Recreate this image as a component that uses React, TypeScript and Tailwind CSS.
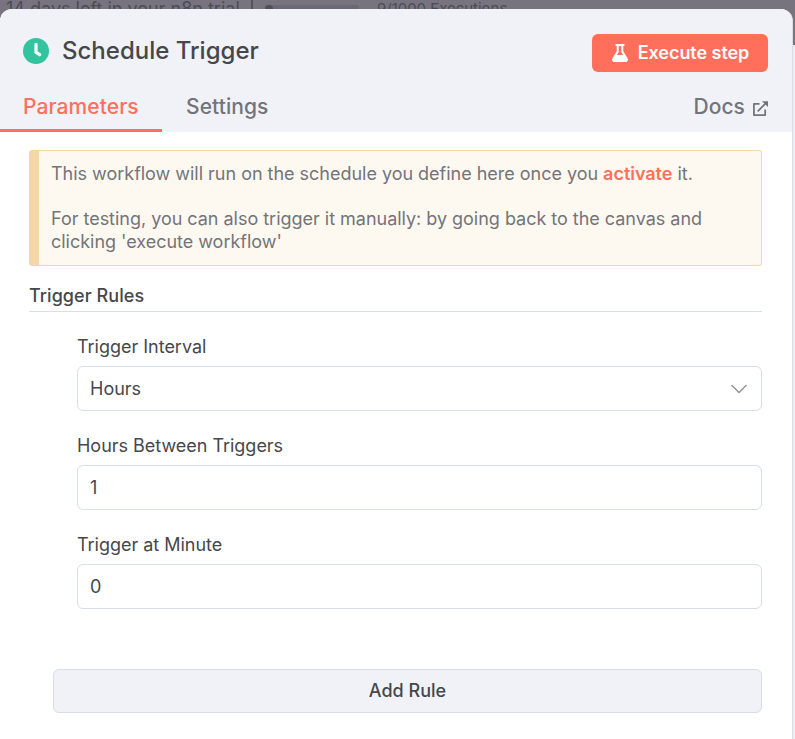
import type { ReactNode } from "react";

function ClockIcon() {
  return (
    <svg width="26" height="26" viewBox="0 0 26 26" className="shrink-0">
      <circle cx="13" cy="13" r="13" fill="#31c49f" />
      <path d="M13 6.300v8l3.700 2.400" fill="none" stroke="#fff" strokeWidth="3.200" strokeLinecap="round" strokeLinejoin="round" />
    </svg>
  );
}

function FlaskIcon() {
  return (
    <svg width="16" height="18" viewBox="0 0 16 18" className="shrink-0">
      <path
        fill="#fff"
        fillRule="evenodd"
        d="M3.6 0h8.8v2h-1.1v5.3l4.4 7.3c.8 1.5 0 3.4-1.8 3.4H2.1C.3 18-.5 16.100.3 14.600l4.400-7.300V2H3.600zM6.700 2v5.900L4.900 11h6.200L9.300 7.900V2z"
      />
    </svg>
  );
}

function ExternalIcon() {
  return (
    <svg width="15" height="15" viewBox="0 0 16 16" className="mt-[3px] shrink-0" fill="none" stroke="#73747a" strokeWidth="1.900">
      <path d="M7 3H1v12h12V9" strokeLinejoin="round" />
      <path d="M5 11 14 2" />
      <path d="M9.500.2H16v6.300z" fill="#73747a" stroke="none" />
    </svg>
  );
}

function Field({ label, value, children }: { label: string; value: string; children?: ReactNode }) {
  return (
    <div className="flex h-[99px] flex-col">
      <div className="flex h-[31px] items-start pt-px text-[18px] leading-[22px] tracking-[-0.02px]">{label}</div>
      <div className="flex h-[45px] items-center justify-between rounded-[6px] border border-[#d9dce9] bg-white pr-[13px] pl-3 text-[18px]">
        <span>{value}</span>
        {children}
      </div>
    </div>
  );
}

export default function App() {
  return (
    <div className="flex h-[739px] w-[795px] flex-col overflow-hidden bg-[#777480] font-['Inter',sans-serif] text-[#46474b]">
      <div className="flex h-[9px] shrink-0 items-start overflow-hidden whitespace-nowrap text-[#4c4b55]">
        <span className="w-[251px] shrink-0 pl-[6px] text-[18px] leading-[18px]">14 days left in your n8n trial</span>
        <span className="h-[9px] w-0.5 bg-[#55535e]" />
        <span className="mt-[5px] ml-[12px] flex h-[5px] w-[94px] rounded-full bg-[#6b6975]">
          <span className="h-2 w-2 rounded-full bg-[#504e5a]" />
        </span>
        <span className="ml-[18px] text-[15px] leading-[18px] tracking-[-0.03px]">9/1000 Executions</span>
      </div>
      <div className="flex min-h-0 flex-1">
        <div className="flex w-[793px] flex-col overflow-hidden rounded-t-[12px] border-r border-[#d9dce9] bg-white">
          <header className="flex h-[123px] shrink-0 flex-col bg-[#f1f2f8]">
            <div className="flex h-[84px] items-center justify-between pr-6 pl-[23px]">
              <h1 className="flex items-center gap-[13px] pb-px text-[24px] leading-[36px] font-[450] tracking-[0px]">
                <ClockIcon />
                Schedule Trigger
              </h1>
              <button className="mt-1 flex h-[38px] w-[176px] items-center justify-center gap-[10px] rounded-[6px] bg-[#ff6f5c] pb-px pl-px text-[18px] font-semibold tracking-[-0.05px] text-white">
                <FlaskIcon />
                Execute step
              </button>
            </div>
            <nav className="flex h-[39px] text-[21px] leading-[28px] font-[450] tracking-[0.08px] text-[#73747a]">
              <span className="w-[162px] border-b-[3px] border-[#ff6f5c] pl-[23px] text-[#ff6f5c]">Parameters</span>
              <span className="pl-6">Settings</span>
              <span className="mr-6 ml-auto flex h-[28px] items-center gap-2">
                Docs
                <ExternalIcon />
              </span>
            </nav>
          </header>
          <main className="flex flex-col pt-[18px] pr-[30px] pl-[29px]">
            <div className="h-[116px] rounded-[3px] border border-l-[10px] border-[#f4d7a8] bg-[#fef9f0] pt-[11px] pl-3 text-[18px] leading-[23px] tracking-[-0.02px] text-[#73747a]">
              <p className="whitespace-nowrap">
                This workflow will run on the schedule you define here once you <b className="font-semibold text-[#ff6f5c]">activate</b> it.
              </p>
              <p className="mt-[22px] whitespace-nowrap">
                For testing, you can also trigger it manually: by going back to the canvas and
                <br />
                clicking 'execute workflow'
              </p>
            </div>
            <h2 className="mt-[18px] h-[28px] border-b border-[#d9dce9] text-[18px] leading-[23px] font-[450] tracking-[0.06px]">Trigger Rules</h2>
            <div className="mt-[23px] flex flex-col pl-12">
              <Field label="Trigger Interval" value="Hours">
                <svg width="18" height="10" viewBox="0 0 18 10" fill="none" stroke="#8f9094" strokeWidth="1.300">
                  <path d="m1.500 1 7.500 7.500L16.500 1" />
                </svg>
              </Field>
              <Field label="Hours Between Triggers" value="1" />
              <Field label="Trigger at Minute" value="0" />
            </div>
            <button className="mt-[37px] ml-6 h-[44px] rounded-[6px] border border-[#d9dce9] bg-[#f1f2f8] pb-px text-[18px] font-[450]">Add Rule</button>
          </main>
        </div>
        <div className="mt-9 flex-1 bg-[#e9ecf5]" />
      </div>
    </div>
  );
}
